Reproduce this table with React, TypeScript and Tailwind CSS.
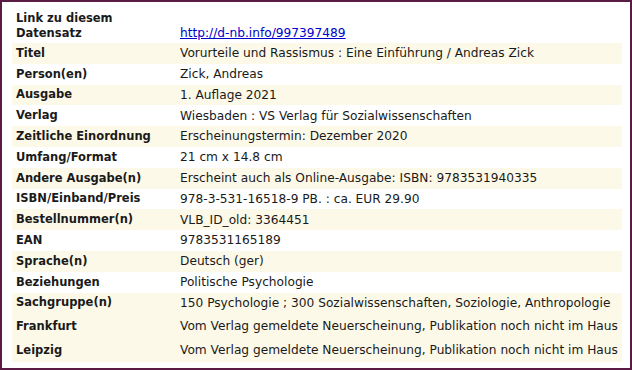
const rows: { label: string; value: string }[] = [
  { label: "Titel", value: "Vorurteile und Rassismus : Eine Einführung / Andreas Zick" },
  { label: "Person(en)", value: "Zick, Andreas" },
  { label: "Ausgabe", value: "1. Auflage 2021" },
  { label: "Verlag", value: "Wiesbaden : VS Verlag für Sozialwissenschaften" },
  { label: "Zeitliche Einordnung", value: "Erscheinungstermin: Dezember 2020" },
  { label: "Umfang/Format", value: "21 cm x 14.8 cm" },
  { label: "Andere Ausgabe(n)", value: "Erscheint auch als Online-Ausgabe: ISBN: 9783531940335" },
  { label: "ISBN/Einband/Preis", value: "978-3-531-16518-9 PB. : ca. EUR 29.90" },
  { label: "Bestellnummer(n)", value: "VLB_ID_old: 3364451" },
  { label: "EAN", value: "9783531165189" },
  { label: "Sprache(n)", value: "Deutsch (ger)" },
  { label: "Beziehungen", value: "Politische Psychologie" },
  { label: "Sachgruppe(n)", value: "150 Psychologie ; 300 Sozialwissenschaften, Soziologie, Anthropologie" },
];

const holdings = [
  { label: "Frankfurt", value: "Vom Verlag gemeldete Neuerscheinung, Publikation noch nicht im Haus" },
  { label: "Leipzig", value: "Vom Verlag gemeldete Neuerscheinung, Publikation noch nicht im Haus" },
];

export default function App() {
  return (
    <div className="w-[632px] h-[370px] bg-white border-2 border-[#5b1a44] pt-[7px] pl-[10px] pr-[8px] text-[#1a1a1a] font-['DejaVu_Sans',Verdana,sans-serif]">
      {/* Permalink */}
      <div className="flex items-end h-[34px] pb-[2px]">
        <div className="w-[168px] pl-[4px] font-bold text-[11.5px] leading-[15px]">
          Link zu diesem
          <br />
          Datensatz
        </div>
        <a href="#" className="text-[#0000cc] underline text-[12.2px] leading-[15px]">
          http://d-nb.info/997397489
        </a>
      </div>

      {/* Record fields */}
      {rows.map((r, i) => (
        <div
          key={r.label}
          className={`flex items-center h-[20.8px] ${i % 2 === 0 ? "bg-[#fdf9e9]" : "bg-white"}`}
        >
          <div className="w-[168px] pl-[4px] font-bold text-[11.5px] whitespace-nowrap">{r.label}</div>
          <div className="text-[12.2px] whitespace-nowrap">{r.value}</div>
        </div>
      ))}

      {/* Holdings */}
      <div className="bg-[#fdf9e9] pt-[1px]">
        {holdings.map((h) => (
          <div key={h.label} className="flex items-center h-[24px]">
            <div className="w-[168px] pl-[4px] font-bold text-[11.5px]">{h.label}</div>
            <div className="text-[12.2px] whitespace-nowrap">{h.value}</div>
          </div>
        ))}
      </div>
    </div>
  );
}
